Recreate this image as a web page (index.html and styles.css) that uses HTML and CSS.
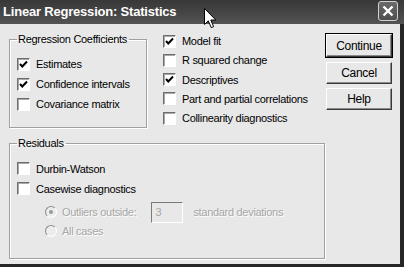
FILE: index.html
```html
<!DOCTYPE html>
<html lang="en">
<head>
    <meta charset="UTF-8">
    <title>Linear Regression: Statistics</title>
    <link rel="stylesheet" href="styles.css">
</head>
<body>
    <div class="window">
        <div class="titlebar">
            <span class="title">Linear Regression: Statistics</span>
            <span class="close">
                <svg width="12" height="12" viewBox="0 0 12 12"><path d="M1.5 1.5 L10.5 10.5 M10.5 1.5 L1.5 10.5" stroke="#fff" stroke-width="2.4" fill="none"/></svg>
            </span>
        </div>

        <div class="dialog">
            <div class="main">
                <div class="top">
                    <fieldset class="group coef">
                        <legend>Regression Coefficients</legend>
                        <label class="check"><span class="box on"><svg viewBox="0 0 11 11"><path d="M2 5 L4.3 7.5 L9 2.5" /></svg></span>Estimates</label>
                        <label class="check"><span class="box on"><svg viewBox="0 0 11 11"><path d="M2 5 L4.3 7.5 L9 2.5" /></svg></span>Confidence intervals</label>
                        <label class="check"><span class="box"></span>Covariance matrix</label>
                    </fieldset>

                    <div class="checks">
                        <label class="check"><span class="box on"><svg viewBox="0 0 11 11"><path d="M2 5 L4.3 7.5 L9 2.5" /></svg></span>Model fit</label>
                        <label class="check"><span class="box"></span>R squared change</label>
                        <label class="check"><span class="box on"><svg viewBox="0 0 11 11"><path d="M2 5 L4.3 7.5 L9 2.5" /></svg></span>Descriptives</label>
                        <label class="check"><span class="box"></span>Part and partial correlations</label>
                        <label class="check"><span class="box"></span>Collinearity diagnostics</label>
                    </div>
                </div>

                <fieldset class="group resid">
                    <legend>Residuals</legend>
                    <label class="check"><span class="box"></span>Durbin-Watson</label>
                    <label class="check"><span class="box"></span>Casewise diagnostics</label>
                    <div class="options">
                        <div class="opt first">
                            <span class="radio on"></span>
                            <span class="dim">Outliers outside:</span>
                            <span class="field">3</span>
                            <span class="dim">standard deviations</span>
                        </div>
                        <div class="opt">
                            <span class="radio"></span>
                            <span class="dim">All cases</span>
                        </div>
                    </div>
                </fieldset>
            </div>

            <div class="buttons">
                <button class="btn default">Continue</button>
                <button class="btn">Cancel</button>
                <button class="btn">Help</button>
            </div>
        </div>

        <!-- mouse pointer sitting on the title bar -->
        <svg class="cursor" width="13" height="21" viewBox="0 0 13 21">
            <path d="M0.5 0.5 V16.5 L4.3 12.8 L7.2 19.6 L9.6 18.6 L6.8 12 H11.8 Z" fill="#fff" stroke="#000" stroke-width="1"/>
        </svg>
    </div>
</body>
</html>
```

FILE: styles.css
```css
body {
    margin: 0;
    background: #e8e8e8;
    font-family: "Liberation Sans", Arial, sans-serif;
    font-size: 11px;
    letter-spacing: -0.3px;
    color: #000;
}
.window {
    position: relative;
    width: 404px;
    height: 267px;
    overflow: hidden;
    background: #e8e8e8;
}
.titlebar {
    height: 24px;
    display: flex;
    align-items: center;
    justify-content: space-between;
    padding: 0 6px 0 3px;
    background: linear-gradient(#383838, #474747 60%, #545454);
    box-sizing: border-box;
}
.title {
    color: #fff;
    font-size: 13px;
    font-weight: bold;
    letter-spacing: -0.2px;
    line-height: 24px;
}
.close {
    width: 20px;
    height: 20px;
    margin-top: -2px;
    box-sizing: border-box;
    border: 1px solid #d0d0d0;
    border-radius: 3px;
    background: linear-gradient(#6a6a6a, #505050);
    display: flex;
    align-items: center;
    justify-content: center;
}
.dialog {
    display: flex;
    height: 243px;
    padding-left: 9px;
    box-sizing: border-box;
    border-right: 4px solid #262626;
    border-bottom: 3px solid #262626;
}
.main {
    width: 316px;
}
.top {
    display: flex;
}
.group {
    margin: 0;
    min-width: 0;
    box-sizing: border-box;
    border: 1px solid #a0a0a0;
    box-shadow: inset 1px 1px 0 #fff, 1px 1px 0 #fff;
    padding: 8px 4px 12px 7px;
}
.group legend {
    padding: 0 2px 0 1px;
    line-height: 13px;
}
.coef {
    width: 138px;
    margin-top: 9px;
}
.checks {
    margin-left: 16px;
    padding-top: 7.5px;
}
.checks .check {
    height: 19.25px;
}
.check {
    display: flex;
    align-items: center;
    height: 20px;
    white-space: nowrap;
}
.box {
    width: 13px;
    height: 13px;
    margin-right: 6px;
    box-sizing: border-box;
    background: #fff;
    border: 1px solid;
    border-color: #6e6e6e #fff #fff #6e6e6e;
    box-shadow: inset 1px 1px 0 #a8a8a8;
    flex: none;
}
.box svg {
    display: block;
    width: 11px;
    height: 11px;
}
.box svg path {
    fill: none;
    stroke: #000;
    stroke-width: 2;
}
.resid {
    width: 316px;
    margin-top: 9px;
    padding-top: 9px;
    padding-bottom: 18px;
}
.options {
    margin-top: 3px;
    padding-left: 28px;
}
.opt {
    display: flex;
    align-items: center;
    height: 17px;
}
.opt.first {
    height: 21px;
}
.radio {
    width: 12px;
    height: 12px;
    margin-right: 5px;
    box-sizing: border-box;
    border-radius: 50%;
    border: 1px solid;
    border-color: #8c8c8c #fff #fff #8c8c8c;
    background: #ececec;
    display: flex;
    align-items: center;
    justify-content: center;
    flex: none;
}
.radio.on::after {
    content: "";
    width: 4px;
    height: 4px;
    border-radius: 50%;
    background: #9a9a9a;
}
.dim {
    color: #a6a6a6;
    text-shadow: 1px 1px 0 #fff;
}
.field {
    width: 32px;
    height: 21px;
    margin: 0 10px 0 15px;
    padding-left: 3px;
    box-sizing: border-box;
    border: 1px solid;
    border-color: #7a7a7a #fff #fff #7a7a7a;
    color: #a6a6a6;
    line-height: 19px;
}
.buttons {
    display: flex;
    flex-direction: column;
    gap: 4.5px;
    margin-left: 1px;
    padding-top: 10px;
}
.btn {
    width: 66px;
    height: 22px;
    padding: 0;
    font: inherit;
    letter-spacing: inherit;
    font-size: 12px;
    color: #000;
    background: #e8e8e8;
    border: 1px solid;
    border-color: #fff #3a3a3a #3a3a3a #fff;
    box-shadow: inset -1px -1px 0 #8a8a8a;
}
.btn.default {
    height: 23px;
    outline: 1px solid #000;
    outline-offset: 0;
    border-color: #fff #3a3a3a #3a3a3a #fff;
}
.cursor {
    position: absolute;
    left: 204px;
    top: 8px;
}
```
